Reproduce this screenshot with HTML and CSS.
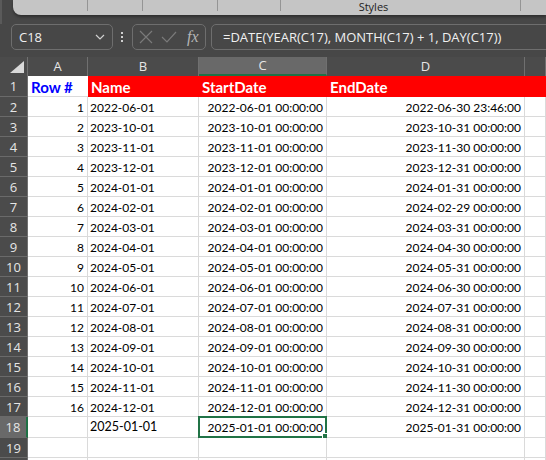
FILE: index.html
```html
<!DOCTYPE html>
<html lang="en">
<head>
    <meta charset="UTF-8">
    <title>Sheet</title>
    <link rel="stylesheet" href="styles.css">
</head>
<body>
    <div class="ribbon">
        <div class="ribbon-panel">
            <span class="sep" style="width:74px"></span>
            <span class="sep" style="width:54px"></span>
            <span class="sep" style="width:74px"></span>
            <span class="sep" style="width:62px"></span>
            <span class="sep styles" style="width:185px">Styles</span>
            <span class="sep" style="width:54px"></span>
        </div>
    </div>

    <div class="formula-bar">
        <div class="name-box">
            <span>C18</span>
            <svg width="10" height="6" viewBox="0 0 10 6"><path d="M1 1 L5 5 L9 1" fill="none" stroke="#d0d0d0" stroke-width="1.2"/></svg>
        </div>
        <div class="dots"><i></i><i></i><i></i></div>
        <div class="fx-box">
            <svg width="14" height="14" viewBox="0 0 14 14"><path d="M1 1 L13 13 M13 1 L1 13" stroke="#7a7a7a" stroke-width="1.2"/></svg>
            <svg width="16" height="14" viewBox="0 0 16 14"><path d="M1 7 L6 12 L15 2" fill="none" stroke="#7a7a7a" stroke-width="1.2"/></svg>
            <span class="fx">fx</span>
        </div>
        <div class="formula">=DATE(YEAR(C17), MONTH(C17) + 1, DAY(C17))</div>
    </div>

    <div class="sheet">
        <div class="corner">
            <svg width="14" height="12" viewBox="0 0 14 12"><path d="M14 0 L14 12 L0 12 Z" fill="#d9d9d9"/></svg>
        </div>
        <div class="col-head">A</div>
        <div class="col-head">B</div>
        <div class="col-head active">C</div>
        <div class="col-head">D</div>
        <div class="col-head"></div>

        <div class="row-head">1</div>
        <div class="cell title blue">Row #</div>
        <div class="cell title red">Name</div>
        <div class="cell title red">StartDate</div>
        <div class="cell title red">EndDate</div>
        <div class="cell title red"></div>
    </div>

    <script>
        var rows = [
            [1, '2022-06-01', '2022-06-30 23:46:00'],
            [2, '2023-10-01', '2023-10-31 00:00:00'],
            [3, '2023-11-01', '2023-11-30 00:00:00'],
            [4, '2023-12-01', '2023-12-31 00:00:00'],
            [5, '2024-01-01', '2024-01-31 00:00:00'],
            [6, '2024-02-01', '2024-02-29 00:00:00'],
            [7, '2024-03-01', '2024-03-31 00:00:00'],
            [8, '2024-04-01', '2024-04-30 00:00:00'],
            [9, '2024-05-01', '2024-05-31 00:00:00'],
            [10, '2024-06-01', '2024-06-30 00:00:00'],
            [11, '2024-07-01', '2024-07-31 00:00:00'],
            [12, '2024-08-01', '2024-08-31 00:00:00'],
            [13, '2024-09-01', '2024-09-30 00:00:00'],
            [14, '2024-10-01', '2024-10-31 00:00:00'],
            [15, '2024-11-01', '2024-11-30 00:00:00'],
            [16, '2024-12-01', '2024-12-31 00:00:00'],
            ['', '2025-01-01', '2025-01-31 00:00:00']
        ];
        var sheet = document.querySelector('.sheet');
        var html = '';
        rows.forEach(function (r, i) {
            var n = i + 2;
            var last = n === 18;
            html += '<div class="row-head' + (last ? ' active' : '') + '">' + n + '</div>';
            html += '<div class="cell num">' + r[0] + '</div>';
            html += '<div class="cell' + (last ? ' big' : '') + '">' + r[1] + '</div>';
            html += '<div class="cell num' + (last ? ' selected' : '') + '">' + r[1] + ' 00:00:00</div>';
            html += '<div class="cell num">' + r[2] + '</div>';
            html += '<div class="cell"></div>';
        });
        // row 19 and the top sliver of row 20
        html += '<div class="row-head">19</div>';
        html += '<div class="cell"></div><div class="cell"></div><div class="cell"></div><div class="cell"></div><div class="cell"></div>';
        html += '<div class="row-head"></div>';
        html += '<div class="cell"></div><div class="cell"></div><div class="cell"></div><div class="cell"></div><div class="cell"></div>';
        sheet.insertAdjacentHTML('beforeend', html);
    </script>
</body>
</html>
```

FILE: styles.css
```css
body {
    margin: 0;
    background-color: #474747;
    font-family: 'Open Sans', sans-serif;
    width: 546px;
    height: 460px;
    overflow: hidden;
}
.ribbon {
    height: 24px;
    padding-left: 11px;
    box-sizing: border-box;
    border-left: 2px solid #5a5a5a;
}
.ribbon-panel {
    display: flex;
    height: 15px;
    background-color: #c5c5c5;
    border-bottom-left-radius: 8px;
    box-shadow: 0 2px 3px rgba(0, 0, 0, 0.35);
}
.ribbon-panel .sep {
    display: block;
    border-right: 1px solid #959595;
    height: 11px;
    flex-shrink: 0;
}
.ribbon-panel .styles {
    text-align: center;
    font-size: 11px;
    line-height: 14px;
    height: 15px;
    border-right: none;
    box-shadow: inset -1px 0 0 #c5c5c5, 1px -4px 0 -3px #959595;
    color: #222;
}
.formula-bar {
    display: flex;
    align-items: center;
    height: 26px;
    padding-left: 11px;
}
.name-box {
    display: flex;
    align-items: center;
    justify-content: space-between;
    width: 102px;
    height: 26px;
    box-sizing: border-box;
    padding: 0 7px 0 7px;
    border: 1px solid #6e6e6e;
    border-radius: 5px;
    color: #f0f0f0;
    font-size: 13px;
}
.dots {
    display: flex;
    flex-direction: column;
    gap: 2px;
    margin: 0 9px 0 8px;
}
.dots i {
    display: block;
    width: 2px;
    height: 2px;
    background-color: #cfcfcf;
}
.fx-box {
    display: flex;
    align-items: center;
    gap: 8px;
    width: 74px;
    height: 26px;
    box-sizing: border-box;
    padding-left: 6px;
    border: 1px solid #6e6e6e;
    border-radius: 5px;
}
.fx-box .fx {
    font-family: 'Liberation Serif', serif;
    font-style: italic;
    font-size: 16px;
    color: #b5b5b5;
    margin-left: 2px;
}
.formula {
    flex: 1;
    height: 26px;
    margin-left: 5px;
    margin-right: -10px;
    box-sizing: border-box;
    padding-left: 11px;
    border: 1px solid #6e6e6e;
    border-radius: 5px;
    color: #f0f0f0;
    font-size: 13px;
    line-height: 24px;
}
.sheet {
    display: grid;
    margin-top: 7px;
    grid-template-columns: 28px 60px 111px 128px 198px 1fr;
    grid-template-rows: 19px 21px repeat(16, 20px) 21px 20px 20px;
    font-family: 'Lato', sans-serif;
}
.corner,
.col-head,
.row-head {
    background-color: #4b4b4b;
    color: #e6e6e6;
    font-family: 'Open Sans', sans-serif;
    font-size: 13px;
    box-sizing: border-box;
}
.corner {
    display: flex;
    align-items: flex-end;
    justify-content: flex-end;
    padding: 0 3px 3px 0;
    border-right: 1px solid #707070;
}
.col-head {
    text-align: center;
    line-height: 19px;
    border-right: 1px solid #707070;
}
.col-head.active {
    background-color: #696969;
    border-bottom: 2px solid #1e7145;
    line-height: 17px;
}
.row-head {
    text-align: center;
    line-height: 20px;
    border-bottom: 1px solid #6a6a6a;
    border-right: 1px solid #707070;
}
.row-head.active {
    background-color: #696969;
    border-right: 2px solid #1e7145;
}
.cell {
    background-color: #fff;
    color: #000;
    font-size: 12px;
    line-height: 18px;
    padding: 2px 3px 0 2px;
    box-sizing: border-box;
    border-right: 1px solid #dadada;
    border-bottom: 1px solid #dadada;
    white-space: nowrap;
    overflow: hidden;
    position: relative;
}
.cell.num {
    text-align: right;
}
.cell.big {
    font-size: 12.5px;
    padding-top: 1px;
}
.cell.title {
    font-size: 15px;
    font-weight: bold;
    line-height: 19px;
    padding-left: 3px;
    border-right: none;
    border-bottom: 1px solid #dadada;
}
.cell.blue {
    color: #0000ff;
}
.cell.red {
    background-color: #ff0000;
    color: #fff;
    border-bottom-color: #ff0000;
}
.cell.selected {
    overflow: visible;
}
.cell.selected::before {
    content: "";
    position: absolute;
    left: -1px;
    top: -1px;
    right: -1px;
    bottom: -1px;
    border: 2px solid #217346;
}
.cell.selected::after {
    content: "";
    position: absolute;
    right: -4px;
    bottom: -4px;
    width: 6px;
    height: 6px;
    background-color: #217346;
    border: 1px solid #fff;
}
```
